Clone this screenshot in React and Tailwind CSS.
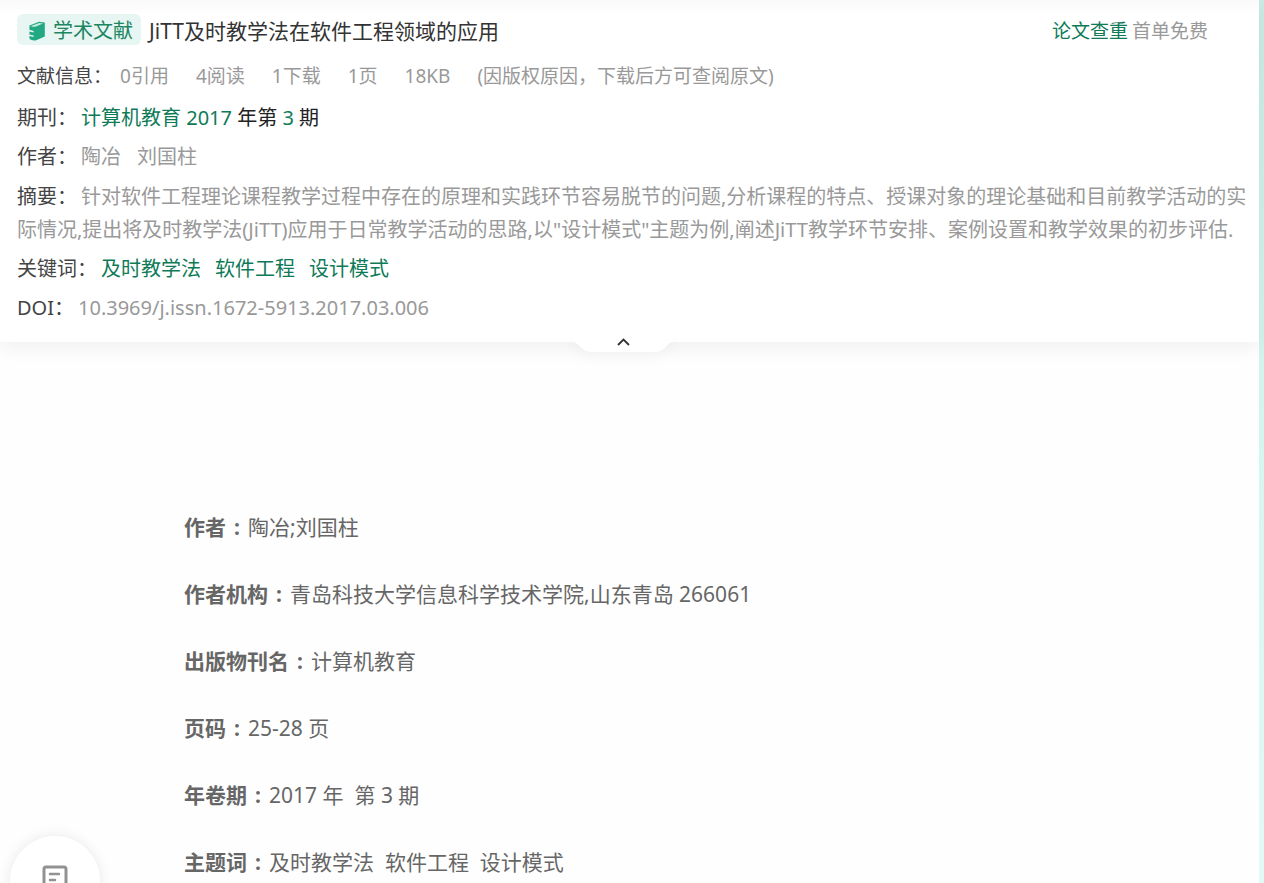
import React from "react";

const details = [
  ["作者", "陶冶;刘国柱"],
  ["作者机构", "青岛科技大学信息科学技术学院,山东青岛 266061"],
  ["出版物刊名", "计算机教育"],
  ["页码", "25-28 页"],
  ["年卷期", "2017 年\u00a0 第 3 期"],
  ["主题词", "及时教学法\u00a0 软件工程\u00a0 设计模式"],
];

const stats = ["0引用", "4阅读", "1下载", "1页", "18KB"];
const keywords = ["及时教学法", "软件工程", "设计模式"];

function BookIcon() {
  return (
    <svg width="16" height="20" viewBox="0 0 16 20" aria-hidden="true">
      <path d="M0.5 4.6 10 0.8 15.8 1.6V15.6L7.2 19.2C4.4 19.8 0.8 19 0.4 17.2V15L4.6 16V14.6L0.4 13.4V10.4L4.6 11.4V10L0.4 8.8Z" fill="#23a884" />
      <path d="M2 5 10.2 1.9 14 2.5 6.4 5.7C4.6 6 3 5.8 2 5Z" fill="#c4ecdf" />
    </svg>
  );
}

function Row({ label, children, className = "leading-8" }) {
  return (
    <div className={className}>
      <span className="mr-1 text-[#444]">{label}：</span>
      {children}
    </div>
  );
}

export default function App() {
  return (
    <div className="flex h-screen overflow-hidden bg-gradient-to-b from-[#c9ebe4] via-[#d5f6ef] to-[#e2faf6] pr-[5px] font-['Noto_Sans','Noto_Sans_CJK_SC',sans-serif] text-xl">
      <main className="min-w-0 flex-1 bg-[#fefefe]">
        <header className="relative bg-gradient-to-b from-[#f9f9f9] to-white to-[14px] pt-[14px] pr-2 pb-[18px] pl-[17px] shadow-[0_6px_18px_rgba(0,0,0,0.06)]">
          <div className="flex items-start pr-[43px]">
            <span className="flex h-[31px] items-center gap-2 rounded-md bg-[#e7f6f2] pt-[3px] pr-2 pl-3 text-[#1c8562]">
              <BookIcon />
              学术文献
            </span>
            <h1 className="ml-2 flex-1 text-[21px] leading-[34px] text-[#333]">JiTT及时教学法在软件工程领域的应用</h1>
            <div className="text-[19px] leading-[34px]">
              <a href="#check" className="text-[#0e7a57]">论文查重</a>
              <span className="ml-1 text-[#999]">首单免费</span>
            </div>
          </div>

          <div className="mt-3 flex items-center text-[19px] leading-8 text-[#999]">
            <span className="mr-2 text-[#444]">文献信息：</span>
            <ul className="flex gap-[27px]">
              {stats.map((s) => (
                <li key={s}>{s}</li>
              ))}
              <li>(因版权原因，下载后方可查阅原文)</li>
            </ul>
          </div>

          <div className="mt-[10px] flex flex-col gap-[7px] text-[#999]">
            <Row label="期刊">
              <a href="#journal" className="text-[#0e7a57]">计算机教育</a>{" "}
              <a href="#year" className="text-[#0e7a57]">2017</a>
              <span className="text-[#222]"> 年第 </span>
              <a href="#issue" className="text-[#0e7a57]">3</a>
              <span className="text-[#222]"> 期</span>
            </Row>
            <Row label="作者">
              <span className="mr-4">陶冶</span>
              <span>刘国柱</span>
            </Row>
            <Row label="摘要" className="leading-[33px]">
              针对软件工程理论课程教学过程中存在的原理和实践环节容易脱节的问题,分析课程的特点、授课对象的理论基础和目前教学活动的实际情况,提出将及时教学法(JiTT)应用于日常教学活动的思路,以"设计模式"主题为例,阐述JiTT教学环节安排、案例设置和教学效果的初步评估.
            </Row>
            <Row label="关键词">
              {keywords.map((k) => (
                <a key={k} href="#keyword" className="mr-[14px] text-[#0e7a57]">{k}</a>
              ))}
            </Row>
            <Row label="DOI">10.3969/j.issn.1672-5913.2017.03.006</Row>
          </div>

          <button
            type="button"
            aria-label="收起"
            className="absolute top-full left-1/2 -mt-[14px] flex h-6 w-[100px] -translate-x-[57px] items-center justify-center drop-shadow-[0_8px_5px_rgba(0,0,0,0.02)]"
          >
            <svg width="100" height="24" viewBox="0 0 100 24" aria-hidden="true">
              <path d="M0 0H100V14C94 14 92 24 82 24H18C8 24 6 14 0 14Z" fill="#fff" />
              <path d="M45 17 50.5 11.5 56 17" fill="none" stroke="#333" strokeWidth="1.8" />
            </svg>
          </button>
        </header>

        <dl className="flex flex-col gap-[35px] pt-[169px] pl-[184px] text-[21px] leading-8 text-[#666]">
          {details.map(([label, value]) => (
            <div key={label} className="flex">
              <dt className="font-bold">{label}<span className="inline-block w-[22px] text-center">:</span></dt>
              <dd>{value}</dd>
            </div>
          ))}
        </dl>
      </main>

      <button
        type="button"
        aria-label="目录"
        className="fixed -bottom-[43px] left-[10px] flex size-[90px] justify-center rounded-full bg-white pt-7 shadow-[0_0_14px_rgba(0,0,0,0.09)]"
      >
        <svg width="28" height="30" viewBox="0 0 28 30" fill="none" stroke="#929292" strokeWidth="3" strokeLinecap="round" aria-hidden="true">
          <rect x="3" y="3" width="22" height="24" rx="2" />
          <path d="M9 10H18M9 16H14" strokeWidth="2.5" />
        </svg>
      </button>
    </div>
  );
}
